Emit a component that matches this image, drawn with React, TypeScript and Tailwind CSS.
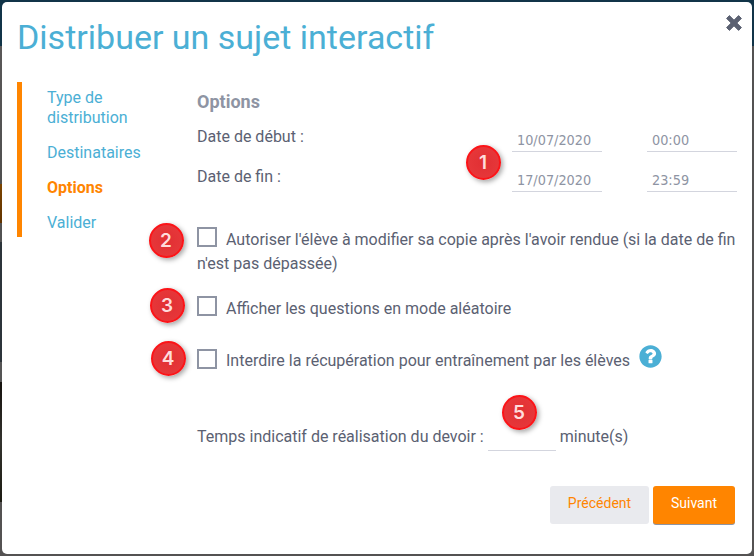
import React from 'react';

const backdrop = [
  'h-[46px] bg-[#113448]',
  'h-[138px] bg-linear-to-b from-[#5a5858] to-[#4f4f4f]',
  'h-[39px] bg-linear-to-b from-[#7c4400] to-[#623400]',
  'h-[19px] bg-[#525252]',
  'h-[120px] bg-[#2c343a]',
  'h-[20px] bg-[#555555]',
  'h-[120px] bg-linear-to-b from-[#16120e] via-[#33332e] to-[#1c1b12]',
  'grow bg-[#545252]',
];

function Badge({ n, className }: { n: number; className: string }) {
  return (
    <span
      className={`absolute flex size-[35px] items-center justify-center rounded-full border-2 border-[#fb1418] bg-radial from-[#e12f33] to-[#e83a3c] pr-px font-[Inter,sans-serif] text-[19px] leading-none font-semibold text-[#ffdcdc] shadow-[2px_2px_5px_rgba(0,0,0,0.35)] ${className}`}
    >
      {n}
    </span>
  );
}

function Box({ className }: { className: string }) {
  return <span className={`mr-[9px] inline-block size-5 border-2 border-[#8e94a3] ${className}`} />;
}

function DateRow({ label, date, time }: { label: string; date: string; time: string }) {
  return (
    <div className="flex h-10 items-start">
      <span className="w-[315px] pt-px leading-6">{label}</span>
      <span className="mr-[45px] flex h-[28px] w-[90px] items-end border-b border-[#d3d5de] pb-px pl-[5px] font-['DejaVu_Sans_Condensed','DejaVu_Sans',sans-serif] text-[14.3px] leading-5 text-[#8e94a3] [font-stretch:condensed]">
        {date}
      </span>
      <span className="flex h-[28px] w-[90px] items-end border-b border-[#d3d5de] pb-px pl-[5px] font-['DejaVu_Sans_Condensed','DejaVu_Sans',sans-serif] text-[14.3px] leading-5 text-[#8e94a3] [font-stretch:condensed]">
        {time}
      </span>
    </div>
  );
}

export default function App() {
  return (
    <div className="relative h-[556px] w-[754px] overflow-hidden bg-[#545252] p-[2px] font-[Roboto,sans-serif] text-base text-[#5b6172]">
      <div className="absolute inset-x-0 top-0 h-[46px] bg-[#113448]" />
      <div className="absolute inset-y-0 left-0 flex w-[2px] flex-col">
        {backdrop.map((c, i) => (
          <div key={i} className={`shrink-0 ${c}`} />
        ))}
      </div>
      <div className="absolute inset-x-0 bottom-0 h-[6px] bg-[#545252]" />

      <main className="relative flex h-[552px] w-[750px] flex-col rounded-[5px] bg-white px-[15px]">
        <header className="flex h-20 shrink-0 items-start justify-between">
          <h1 className="pt-[13px] text-[34px] leading-[44px] whitespace-nowrap text-[#4bafd5]">
            Distribuer un sujet interactif
          </h1>
          <svg
            viewBox="0 0 16 16"
            className="mt-[12.5px] -mr-[5px] size-4 fill-[#5b6172] stroke-[#5b6172]"
            strokeLinejoin="round"
          >
            <path d="M3.4.6 8 5.2 12.6.6 15.4 3.4 10.8 8l4.6 4.6-2.8 2.8L8 10.8l-4.6 4.6L.6 12.6 5.2 8 .6 3.4Z" />
          </svg>
        </header>

        <div className="flex">
          <nav className="flex h-[155px] w-[180px] shrink-0 flex-col gap-[15px] border-l-5 border-[#ff8500] pt-[6px] pl-[25px] leading-5 text-[#4bafd5]">
            <a>
              Type de
              <br />
              distribution
            </a>
            <a>Destinataires</a>
            <a className="font-bold text-[#ff8500]">Options</a>
            <a>Valider</a>
          </nav>

          <section className="w-[540px]">
            <h2 className="h-[42px] pt-[8px] text-[18px] leading-6 font-bold text-[#8e94a3]">Options</h2>
            <DateRow label="Date de début :" date="10/07/2020" time="00:00" />
            <DateRow label="Date de fin :" date="17/07/2020" time="23:59" />
            <p className="mt-[23px] leading-6 whitespace-nowrap">
              <Box className="align-[-2px]" />
              Autoriser l'élève à modifier sa copie après l'avoir rendue (si la date de fin
              <br />
              n'est pas dépassée)
            </p>
            <p className="mt-[20px] leading-6">
              <Box className="align-[-2px]" />
              Afficher les questions en mode aléatoire
            </p>
            <p className="mt-[28px] flex h-6 items-center leading-6 whitespace-nowrap">
              <span>
                <Box className="align-[-3px]" />
                Interdire la récupération pour entraînement par les élèves
              </span>
              <svg viewBox="0 0 512 512" className="mb-[9px] ml-[9px] size-[23px] fill-[#4bafd5]">
                <path d="M504 256c0 137-111 248-248 248S8 393 8 256 119 8 256 8s248 111 248 248ZM263 90c-55 0-90 23-117 64-4 6-3 13 3 17l34 26c5 4 13 3 17-2 18-23 30-36 57-36 20 0 45 13 45 32 0 15-12 22-32 33-23 13-54 30-54 71v9c0 7 5 12 12 12h56c7 0 12-5 12-12v-4c0-29 84-30 84-109 0-59-61-101-117-101Zm-51 250v56c0 7 5 12 12 12h64c7 0 12-5 12-12v-56c0-7-5-12-12-12h-64c-7 0-12 5-12 12Z" />
              </svg>
            </p>
            <p className="mt-[47px] flex h-[31px] items-start leading-[34px]">
              Temps indicatif de réalisation du devoir :
              <span className="mx-1 h-[31px] w-[68px] border-b border-[#d3d5de]" />
              minute(s)
            </p>
            <div className="mt-[35px] flex justify-end gap-1 pr-[2px] text-[14px]">
              <button className="h-[38px] w-[99px] rounded-[3px] bg-[#e9eaee] pb-[4px] text-[#ff8500]">
                Précédent
              </button>
              <button className="h-[38px] w-[82px] rounded-[3px] bg-[#ff8500] pb-[4px] text-white shadow-[0_1px_0_#8e94a3]">
                Suivant
              </button>
            </div>
          </section>
        </div>
      </main>

      <Badge n={1} className="top-[145px] left-[466px]" />
      <Badge n={2} className="top-[223px] left-[149px]" />
      <Badge n={3} className="top-[288px] left-[150px]" />
      <Badge n={4} className="top-[341px] left-[151px]" />
      <Badge n={5} className="top-[395px] left-[502px]" />
    </div>
  );
}
